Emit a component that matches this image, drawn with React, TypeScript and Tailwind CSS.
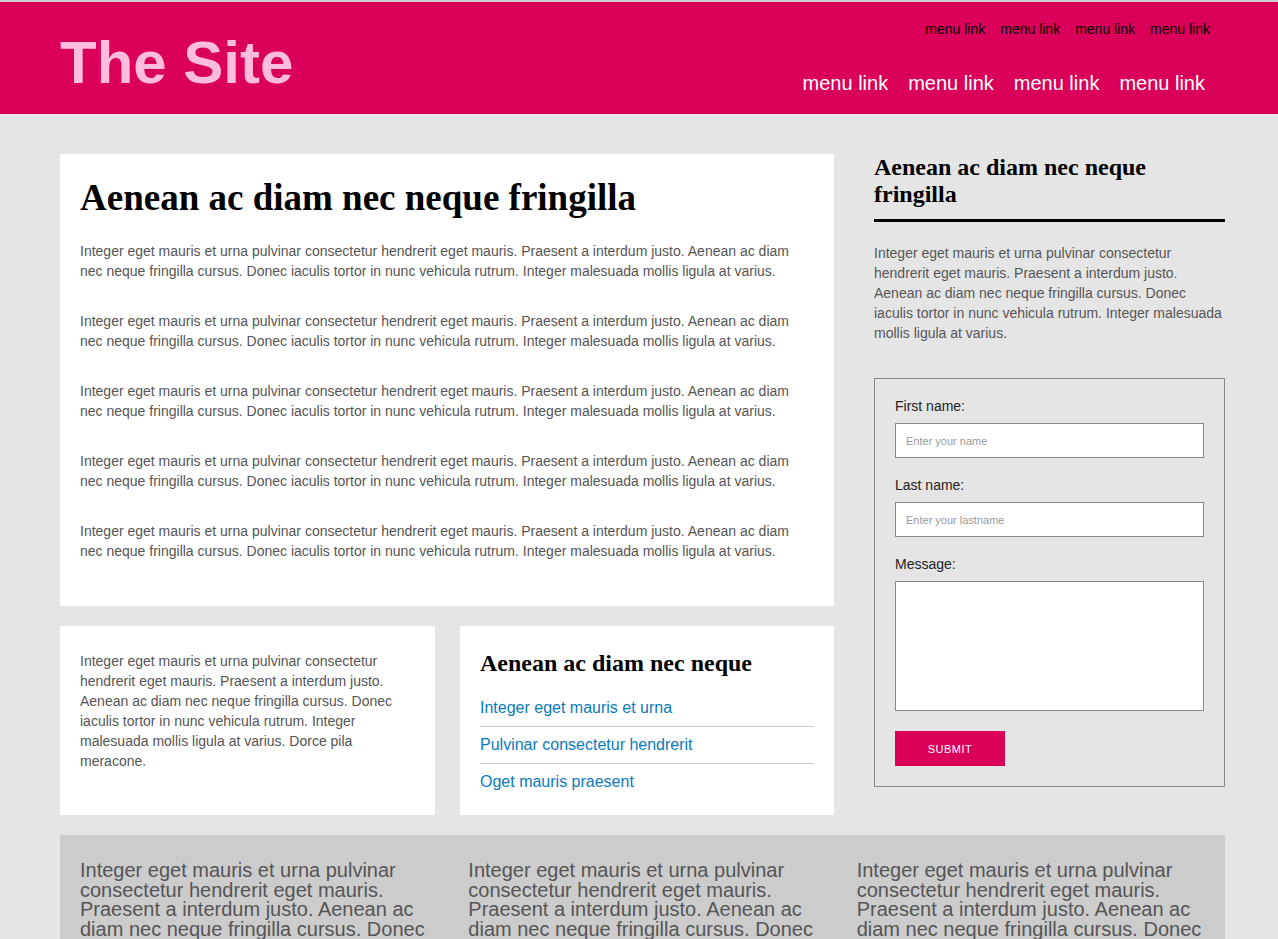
import React from "react";

const P =
  "Integer eget mauris et urna pulvinar consectetur hendrerit eget mauris. Praesent a interdum justo. Aenean ac diam nec neque fringilla cursus. Donec iaculis tortor in nunc vehicula rutrum. Integer malesuada mollis ligula at varius.";

const sans = "font-['Liberation_Sans',Arial,sans-serif]";
const serif = "font-['Liberation_Serif','Times_New_Roman',serif]";

export default function App() {
  return (
    <div className={`min-h-screen bg-[#e5e5e5] ${sans}`}>
      <header className="border-t-2 border-[#cfcfcf] bg-[#da005a]">
        <div className="ml-[60px] flex h-[112px] w-[1165px] items-start justify-between">
          <div className="pt-[26px] text-[60px] font-bold leading-[70px] text-[#ffbcdc]">The Site</div>
          <nav className="flex flex-col items-end pr-[15px]">
            <ul className="mt-[18px] flex gap-[15px] text-[14px] leading-[18px] text-black">
              <li>menu link</li>
              <li>menu link</li>
              <li>menu link</li>
              <li>menu link</li>
            </ul>
            <ul className="mt-[33px] mr-[5px] flex gap-[20px] text-[20px] leading-[24px] text-white">
              <li>menu link</li>
              <li>menu link</li>
              <li>menu link</li>
              <li>menu link</li>
            </ul>
          </nav>
        </div>
      </header>

      <main className="ml-[60px] w-[1165px] pt-[40px]">
        <div className="flex gap-[40px]">
          <div className="flex w-[774px] flex-col gap-[20px]">
            <section className="bg-white px-[20px] pt-[20px] pb-[45px]">
              <h1 className={`${serif} text-[37px] font-bold leading-[48px] text-black`}>
                Aenean ac diam nec neque fringilla
              </h1>
              <div className="mt-[19px] flex flex-col gap-[30px] text-[14px] leading-[20px] text-[#555]">
                <p>{P}</p>
                <p>{P}</p>
                <p>{P}</p>
                <p>{P}</p>
                <p>{P}</p>
              </div>
            </section>
            <div className="flex gap-[25px]">
              <section className="h-[189px] w-[375px] bg-white px-[20px] pt-[25px] text-[14px] leading-[20px] text-[#555]">
                <p>{P} Dorce pila meracone.</p>
              </section>
              <section className="h-[189px] w-[374px] bg-white px-[20px] pt-[22px]">
                <h3 className={`${serif} text-[24px] font-bold leading-[30px] text-black`}>
                  Aenean ac diam nec neque
                </h3>
                <ul className="mt-[16px] text-[16px] leading-[20px] text-[#0a7ac0]">
                  <li className="border-b border-[#cccccc] pt-[4px] pb-[8px]">Integer eget mauris et urna</li>
                  <li className="border-b border-[#cccccc] pt-[8px] pb-[8px]">Pulvinar consectetur hendrerit</li>
                  <li className="pt-[8px] pb-[8px]">Oget mauris praesent</li>
                </ul>
              </section>
            </div>
          </div>

          <aside className="w-[351px]">
            <h2 className={`${serif} border-b-[3px] border-black pb-[11px] text-[24px] font-bold leading-[27px] text-black`}>
              Aenean ac diam nec neque fringilla
            </h2>
            <p className="mt-[21px] text-[14px] leading-[20px] text-[#555]">{P}</p>
            <form className="mt-[35px] flex flex-col border border-[#888] px-[20px] pt-[19px] pb-[20px] text-[14px] text-[#222]">
              <label className="leading-[17px]">First name:</label>
              <input
                className="mt-[8px] h-[35px] w-[309px] border border-[#888] bg-white px-[10px] text-[11px] placeholder:text-[#999]"
                placeholder="Enter your name"
              />
              <label className="mt-[19px] leading-[17px]">Last name:</label>
              <input
                className="mt-[8px] h-[35px] w-[309px] border border-[#888] bg-white px-[10px] text-[11px] placeholder:text-[#999]"
                placeholder="Enter your lastname"
              />
              <label className="mt-[19px] leading-[17px]">Message:</label>
              <textarea className="mt-[8px] h-[130px] w-[309px] resize-none border border-[#888] bg-white" />
              <button
                type="button"
                className="mt-[20px] h-[35px] w-[110px] bg-[#da005a] pt-[1px] text-[11px] tracking-[0.5px] text-white uppercase"
              >
                Submit
              </button>
            </form>
          </aside>
        </div>

        <footer className="mt-[20px] grid grid-cols-3 bg-[#cccccc] pt-[26px] pb-[20px] text-[20px] leading-[19.7px] text-[#555]">
          <p className="px-[20px]">{P}</p>
          <p className="px-[20px]">{P}</p>
          <p className="px-[20px]">{P}</p>
        </footer>
      </main>
    </div>
  );
}
